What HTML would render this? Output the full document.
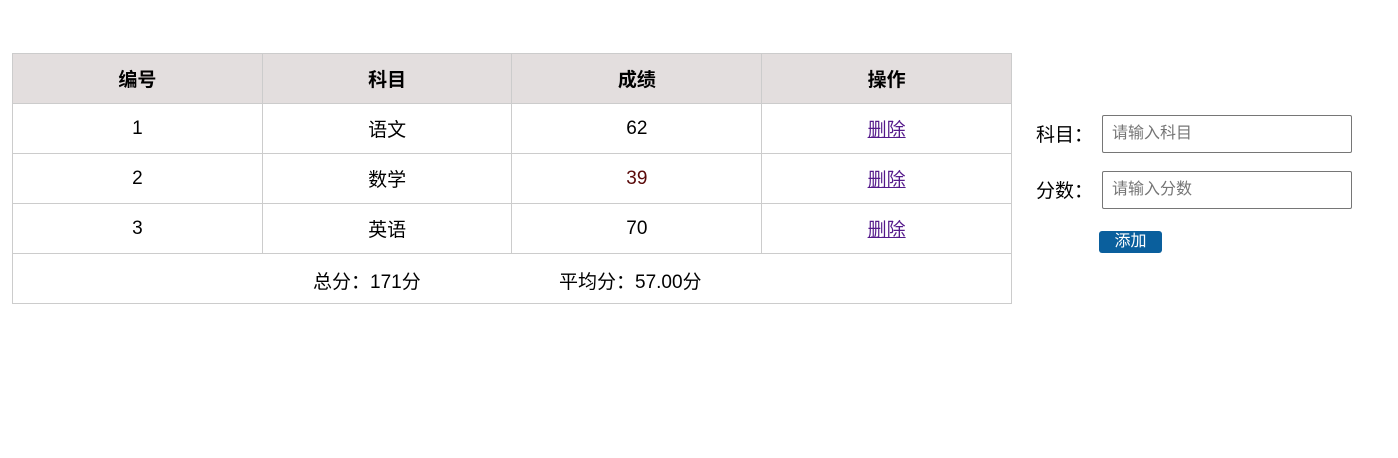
<!DOCTYPE html>
<html><head><meta charset="utf-8"><style>
body{margin:0;width:1398px;height:458px;background:#fff;font-family:"Liberation Sans","Noto Sans CJK SC",sans-serif;position:relative;}
table{position:absolute;left:12px;top:53px;border-collapse:collapse;width:1000px;}
td,th{border:1px solid #ccc;height:49px;width:249px;text-align:center;font-size:19px;padding:0;}
th{background:#e3dede;font-weight:bold;}
a{color:#551a8b;}
.lbl{position:absolute;left:1036px;font-size:19px;}
.inp{position:absolute;left:1102px;border:1px solid #767676;border-radius:2px;font-size:16px;color:#757575;line-height:36px;padding-left:9px;box-sizing:border-box;width:250px;height:38px;}
.btn{position:absolute;left:1099px;top:231px;width:63px;height:22px;background:#0a5f9d;color:#fff;border-radius:3px;font-size:16px;text-align:center;line-height:22px;}
</style></head><body>
<table>
<tr><th>编号</th><th>科目</th><th>成绩</th><th>操作</th></tr>
<tr><td>1</td><td>语文</td><td>62</td><td><a href="#">删除</a></td></tr>
<tr><td>2</td><td>数学</td><td style="color:#5a0a0a">39</td><td><a href="#">删除</a></td></tr>
<tr><td>3</td><td>英语</td><td>70</td><td><a href="#">删除</a></td></tr>
<tr><td colspan="4" style="position:relative"><span style="position:absolute;left:300px;top:13px">总分：171分</span><span style="position:absolute;left:546px;top:13px">平均分：57.00分</span></td></tr>
</table>
<div class="lbl" style="top:120px">科目：</div>
<div class="inp" style="top:115px">请输入科目</div>
<div class="lbl" style="top:176px">分数：</div>
<div class="inp" style="top:171px">请输入分数</div>
<div class="btn">添加</div>
</body></html>
